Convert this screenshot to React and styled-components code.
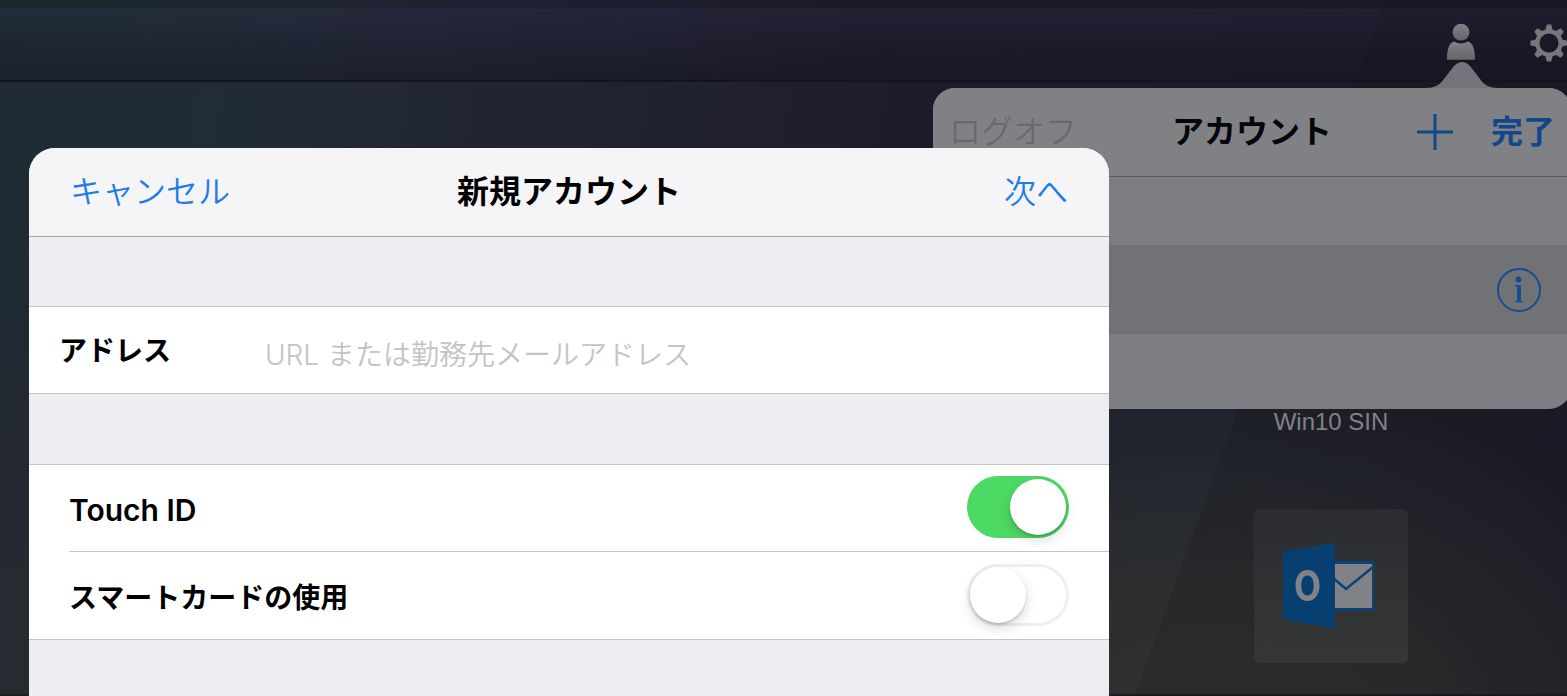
import React from 'react';
import styled, { createGlobalStyle } from 'styled-components';

const Global = createGlobalStyle`
  * { box-sizing: border-box; }
  body { margin: 0; font-family: Inter, "Noto Sans CJK JP", sans-serif; background: #1e1d2b; }
  button, input { font: inherit; padding: 0; border: 0; background: none; }
  button { cursor: pointer; }
`;

const Desktop = styled.div`
  position: relative;
  display: flex;
  flex-direction: column;
  min-height: 100vh;
  overflow: hidden;
  background:
    linear-gradient(to top, #1c1d20 2px, transparent 2px),
    radial-gradient(ellipse 520px 330px at 78% 104%, #32332f 0%, #2c2e2f 40%, rgba(36, 39, 46, 0) 100%),
    linear-gradient(100deg, transparent 78%, rgba(30, 27, 41, 0.9) 100%),
    linear-gradient(to bottom, rgba(38, 38, 48, 0) 45%, rgba(42, 42, 50, 0.8) 85%) 0 0 / 40% 100% no-repeat,
    linear-gradient(to bottom, rgba(32, 36, 49, 0) 20%, #20242f 80%),
    linear-gradient(100deg, #202c35 0%, #222a36 18%, #212332 36%, #1e1c2b 54%, #1d1b29 100%);
`;

const Beams = styled.svg`
  position: absolute;
  inset: 0;
  width: 100%;
  height: 100%;
`;

const TopBar = styled.header`
  position: relative;
  display: flex;
  justify-content: flex-end;
  align-items: center;
  gap: 54px;
  height: 82px;
  margin-right: -1px;
  padding-top: 6px;
  border-bottom: 2px solid #13141e;
  background: linear-gradient(to bottom, rgba(10, 8, 20, 0.16) 8px, rgba(50, 44, 84, 0.2) 9px, rgba(26, 24, 48, 0.22) 50%, rgba(16, 16, 30, 0.36) 100%);
`;

const IconButton = styled.button`
  display: flex;
  color: #77777b;
`;

const Apps = styled.main`
  position: relative;
  display: flex;
  flex-direction: column;
  align-items: center;
  align-self: flex-end;
  gap: 73px;
  width: 154px;
  margin: 326px 159px 0 0;
`;

const AppName = styled.span`
  font: 24px/28px "Liberation Sans", sans-serif;
  color: #828286;
  white-space: nowrap;
`;

const AppTile = styled.button`
  display: flex;
  align-items: center;
  justify-content: center;
  width: 154px;
  height: 154px;
  padding-right: 4px;
  border-radius: 6px;
  background: linear-gradient(to bottom, #2a2c31, #353735);
`;

const Popover = styled.section`
  position: absolute;
  top: 88px;
  right: -4px;
  width: 638px;
  height: 321px;
  border-radius: 22px;
  background: #7d7e83;
`;

const PopoverArrow = styled.svg`
  position: absolute;
  right: 73px;
  bottom: 100%;
  display: block;
`;

const BarTitle = styled.h2`
  margin: 0;
  font-size: 32px;
  line-height: 40px;
  font-weight: 700;
  text-align: center;
  white-space: nowrap;
`;

const PopoverBar = styled.div`
  display: grid;
  grid-template-columns: 1fr auto 1fr;
  align-items: center;
  height: 89px;
  padding: 0 16px;
  border-bottom: 1px solid #5a5b60;
  border-radius: 22px 22px 0 0;
  background: #808185;
  color: #050609;
`;

const BarActions = styled.div`
  display: flex;
  justify-content: flex-end;
  align-items: center;
  gap: 38px;
`;

const BarButton = styled.button`
  display: flex;
  justify-self: ${(p) => p.$side || 'auto'};
  font-size: 32px;
  line-height: 40px;
  font-weight: ${(p) => p.$weight || 350};
  color: ${(p) => p.$color || '#1f7be6'};
  white-space: nowrap;
`;

const AccountRow = styled.div`
  display: flex;
  justify-content: flex-end;
  align-items: center;
  height: 89px;
  margin-top: 68px;
  padding-right: 29px;
  background: #717275;
`;

const Sheet = styled.form`
  position: absolute;
  top: 148px;
  bottom: 0;
  left: 29px;
  width: 1080px;
  max-width: calc(100% - 58px);
  overflow: hidden;
  border-radius: 26px 26px 0 0;
  background: #eeedf2;
  color: #000;
`;

const SheetBar = styled.div`
  display: grid;
  grid-template-columns: 1fr auto 1fr;
  align-items: center;
  height: 89px;
  padding: 0 41px;
  border-bottom: 1px solid #a5a5aa;
  background: #f5f5f8;
`;

const Group = styled.div`
  margin-top: ${(p) => p.$gap}px;
  border: solid #c6c6ca;
  border-width: 1px 0;
  background: #fff;
`;

const FieldRow = styled.div`
  display: flex;
  align-items: center;
  height: 86px;
  padding: 0 30px;
`;

const FieldLabel = styled.label`
  flex: 0 0 206px;
  padding-top: 2px;
  font-size: 28px;
  line-height: 40px;
  font-weight: 700;
`;

const AddressInput = styled.input`
  flex: 1;
  min-width: 0;
  height: 48px;
  padding-top: 10px;
  font-size: 28px;
  font-weight: 350;
  outline: none;
  &::placeholder { color: #c3c3c8; opacity: 1; }
`;

const SwitchRow = styled.div`
  display: flex;
  justify-content: space-between;
  align-items: center;
  height: 87px;
  margin-left: 40px;
  padding-right: 40px;
  border-bottom: ${(p) => (p.$divided ? '1px solid #c6c6ca' : '0')};
`;

const SwitchLabel = styled.label`
  padding-top: 4px;
  font-size: ${(p) => (p.$latin ? 30 : 28)}px;
  line-height: 40px;
  font-weight: ${(p) => (p.$latin ? 600 : 700)};
`;

const Switch = styled.input.attrs({ type: 'checkbox', role: 'switch' })`
  appearance: none;
  display: flex;
  align-items: center;
  width: 102px;
  height: 62px;
  margin: 0 0 2px;
  padding: 0 3px;
  border-radius: 31px;
  background: #fff;
  box-shadow: inset 0 0 0 3px #efeff0;
  &::before {
    content: '';
    width: 56px;
    height: 56px;
    border-radius: 50%;
    background: #fff;
    box-shadow: 0 5px 12px rgba(0, 0, 0, 0.16), 0 2px 2px rgba(0, 0, 0, 0.12);
  }
  &:checked {
    justify-content: flex-end;
    background: #4cd964;
    box-shadow: none;
  }
`;

const teeth = [0, 45, 90, 135, 180, 225, 270, 315];

export default function App() {
  return (
    <>
      <Global />
      <Desktop>
        <Beams viewBox="0 0 1567 696" preserveAspectRatio="none" aria-hidden="true">
          <path d="M0 0H303L52 696H0Z" fill="#1c3034" opacity=".16" />
          <path d="M1385 0H1567V696H1135Z" fill="#05060c" opacity=".12" />
        </Beams>
        <TopBar>
          <IconButton aria-label="アカウント">
            <svg width="30" height="40" viewBox="0 0 30 40">
              <defs>
                <linearGradient id="person" x1="0" y1="0" x2="0" y2="1">
                  <stop offset="0" stopColor="#818185" />
                  <stop offset="1" stopColor="#66666a" />
                </linearGradient>
              </defs>
              <circle cx="15" cy="9.200" r="8.400" fill="url(#person)" />
              <path d="M8 18.500Q15 22.500 22 18.500C27 20 29 26 29 36.800H1C1 26 3 20 8 18.500Z" fill="url(#person)" />
            </svg>
          </IconButton>
          <IconButton aria-label="設定">
            <svg width="38" height="38" viewBox="-19 -19 38 38">
              <circle r="11.700" fill="none" stroke="currentColor" strokeWidth="4.200" />
              {teeth.map((a) => (
                <path key={a} d="M-3.800 -12.500L-2.200 -18.600H2.200L3.800 -12.500Z" fill="currentColor" transform={`rotate(${a})`} />
              ))}
            </svg>
          </IconButton>
        </TopBar>

        <Apps>
          <AppName>Win10 SIN</AppName>
          <AppTile aria-label="Outlook">
            <svg width="92" height="88" viewBox="0 0 92 88">
              <rect x="50" y="19" width="41" height="50" fill="#0b4273" />
              <rect x="52" y="22" width="37" height="44" fill="#818287" />
              <path d="M50 36L63 47L90 25" fill="none" stroke="#0b4273" strokeWidth="2.500" />
              <path d="M0 9.500L52 1V87L0 77.500Z" fill="#073f71" />
              <path fillRule="evenodd" d="M24.500 28C31.500 28 36.500 34 36.500 43.500S31.500 59 24.500 59S12.500 53 12.500 43.500S17.500 28 24.500 28ZM24.500 33.500C20.500 33.500 18.300 37.500 18.300 43.500S20.500 53.500 24.500 53.500S30.700 49.500 30.700 43.500S28.500 33.500 24.500 33.500Z" fill="#818287" />
            </svg>
          </AppTile>
        </Apps>

        <Popover>
          <PopoverArrow width="72" height="27" viewBox="0 0 72 27" aria-hidden="true">
            <path d="M0 27C12 27 15 22 21 14L28 5Q36 -3 44 5L51 14C57 22 60 27 72 27Z" fill="#74757a" />
          </PopoverArrow>
          <PopoverBar>
            <BarButton type="button" disabled $side="start" $color="#696a6e">ログオフ</BarButton>
            <BarTitle>アカウント</BarTitle>
            <BarActions>
              <BarButton type="button" aria-label="追加" $color="#124789">
                <svg width="36" height="36" viewBox="0 0 36 36">
                  <path d="M18 0V36M0 18H36" stroke="currentColor" strokeWidth="3" />
                </svg>
              </BarButton>
              <BarButton type="button" $weight={700} $color="#124789">完了</BarButton>
            </BarActions>
          </PopoverBar>
          <AccountRow>
            <BarButton type="button" aria-label="詳細" $color="#164d91">
              <svg width="46" height="46" viewBox="0 0 46 46">
                <circle cx="23" cy="23" r="21" fill="none" stroke="currentColor" strokeWidth="2" />
                <circle cx="22.500" cy="12.500" r="2.900" fill="currentColor" />
                <path d="M19 18H25V34H27V35.300H19V34H21V19.300H19Z" fill="currentColor" />
              </svg>
            </BarButton>
          </AccountRow>
        </Popover>

        <Sheet onSubmit={(e) => e.preventDefault()}>
          <SheetBar>
            <BarButton type="button" $side="start">キャンセル</BarButton>
            <BarTitle as="h1">新規アカウント</BarTitle>
            <BarButton type="submit" $side="end">次へ</BarButton>
          </SheetBar>
          <Group $gap={69}>
            <FieldRow>
              <FieldLabel htmlFor="address">アドレス</FieldLabel>
              <AddressInput id="address" type="text" placeholder="URL または勤務先メールアドレス" />
            </FieldRow>
          </Group>
          <Group $gap={70}>
            <SwitchRow $divided>
              <SwitchLabel htmlFor="touch" $latin>Touch ID</SwitchLabel>
              <Switch id="touch" defaultChecked />
            </SwitchRow>
            <SwitchRow>
              <SwitchLabel htmlFor="card">スマートカードの使用</SwitchLabel>
              <Switch id="card" />
            </SwitchRow>
          </Group>
        </Sheet>
      </Desktop>
    </>
  );
}
